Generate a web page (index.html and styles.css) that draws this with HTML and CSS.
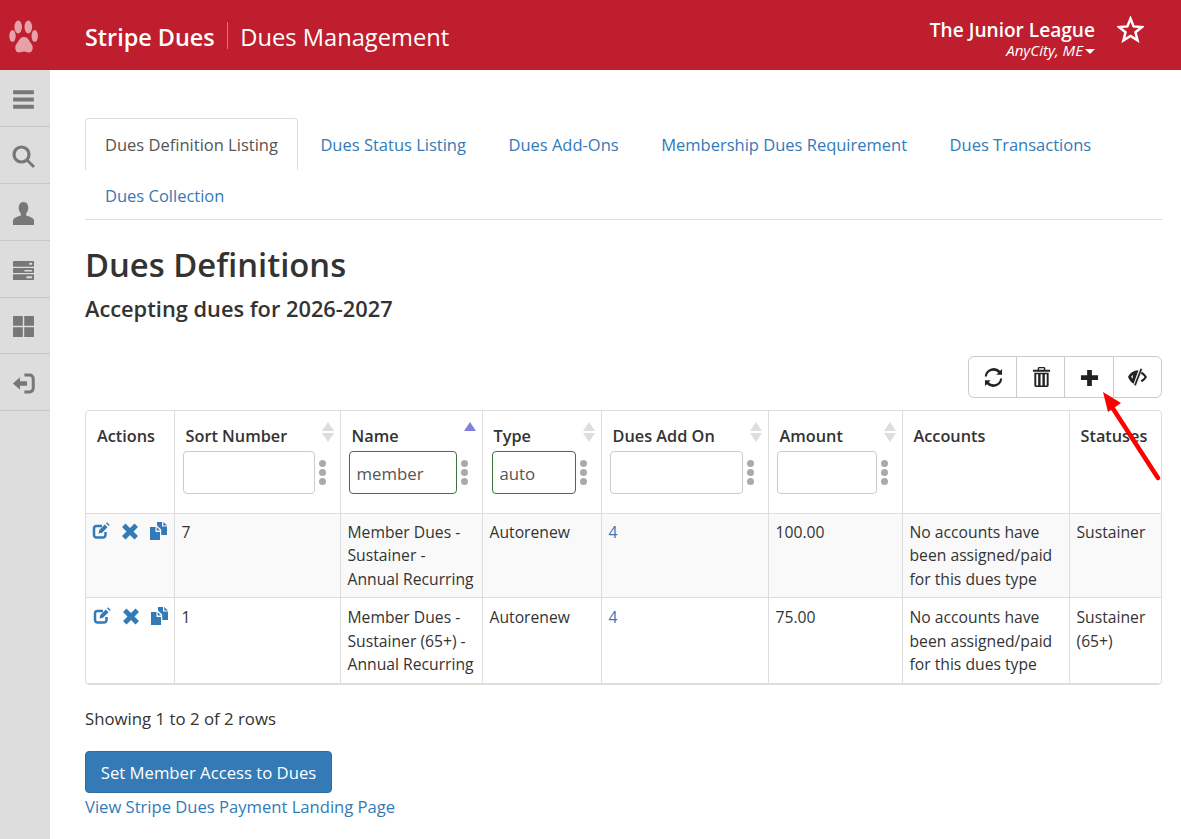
FILE: index.html
```html
<!DOCTYPE html>
<html lang="en">
<head>
<meta charset="utf-8">
<title>Dues Definitions</title>
<link rel="stylesheet" href="styles.css">
</head>
<body>
<header class="topbar">
  <div class="logo">
    <svg class="paw" viewBox="0 0 30 36"><g fill="#e7a1a9"><path d="M15 19c-4 0-5 3.500-7.500 7-2.500 3.500-1 8.500 2.500 8.500 2 0 3-1 5-1s3 1 5 1c3.500 0 5-5 2.500-8.500C20 22.500 19 19 15 19z"/><ellipse cx="9.200" cy="9" rx="3.800" ry="6.500"/><ellipse cx="19.300" cy="9" rx="3.800" ry="6.500"/><ellipse cx="3.500" cy="18" rx="3.200" ry="6"/><ellipse cx="25.700" cy="18" rx="3.200" ry="6"/></g></svg>
  </div>
  <div class="brand">Stripe Dues</div>
  <div class="module">Dues Management</div>
  <div class="org">
    <div class="org-name">The Junior League</div>
    <div class="org-city">AnyCity, ME<span class="caret"></span></div>
  </div>
  <svg class="star" viewBox="0 0 26 26"><path d="M13 2.500l3 7.500 8 .6-6.200 5.100 2 7.800L13 19.200l-6.800 4.300 2-7.800L2 10.600l8-.6z" fill="none" stroke="#fff" stroke-width="2.400"/></svg>
</header>
<div class="shell">
  <nav class="sidebar">
    <div class="side-item"><svg viewBox="0 0 20 20"><path d="M1 2h18v3.500H1zM1 8.200h18v3.500H1zM1 14.500h18V18H1z"/></svg></div>
    <div class="side-item"><svg viewBox="0 0 23 23"><circle cx="9.500" cy="9.500" r="7.500" fill="none" stroke="#777" stroke-width="3.200"/><path d="M14.500 16.500l2-2 6.500 6.500-2 2z"/></svg></div>
    <div class="side-item"><svg viewBox="0 0 24 24"><path d="M12 0c3.500 0 5 3 5 6 0 2.500-1 4.500-2.200 6v2c3 1 8.200 2.500 8.200 5.500V24H1v-4.500c0-3 5.200-4.500 8.200-5.500v-2C8 10.500 7 8.500 7 6c0-3 1.500-6 5-6z"/></svg></div>
    <div class="side-item"><svg viewBox="0 0 24 22"><path fill-rule="evenodd" d="M2 1h20a1 1 0 0 1 1 1v4a1 1 0 0 1-1 1H2a1 1 0 0 1-1-1V2a1 1 0 0 1 1-1zm16 2v2h3V3zM2 8.500h20a1 1 0 0 1 1 1v3a1 1 0 0 1-1 1H2a1 1 0 0 1-1-1v-3a1 1 0 0 1 1-1zm11 2v1.500h8V10.500zM2 15h20a1 1 0 0 1 1 1v4a1 1 0 0 1-1 1H2a1 1 0 0 1-1-1v-4a1 1 0 0 1 1-1zm13 2v2h6v-2z"/></svg></div>
    <div class="side-item side-short"><svg viewBox="0 0 22 22"><path d="M1 1h9.300v9.300H1zM11.700 1H21v9.300h-9.300zM1 11.700h9.300V21H1zM11.700 11.700H21V21h-9.300z"/></svg></div>
    <div class="side-item"><svg viewBox="0 0 26 22"><path d="M1 11l8-7v4.500h8v5H9V18z"/><path d="M14 1.500h6a4 4 0 0 1 4 4v11a4 4 0 0 1-4 4h-6" fill="none" stroke="#777" stroke-width="3.400"/></svg></div>
  </nav>
  <main class="main">
    <ul class="tabs">
      <li class="tab active">Dues Definition Listing</li>
      <li class="tab"><a href="#">Dues Status Listing</a></li>
      <li class="tab"><a href="#">Dues Add-Ons</a></li>
      <li class="tab"><a href="#">Membership Dues Requirement</a></li>
      <li class="tab"><a href="#">Dues Transactions</a></li>
      <li class="tab"><a href="#">Dues Collection</a></li>
    </ul>
    <h1 class="title">Dues Definitions</h1>
    <h2 class="subtitle">Accepting dues for 2026-2027</h2>
    <div class="toolbar">
      <button class="tool tool-nudge"><svg viewBox="0 0 20 20"><path d="M3 9a7 7 0 0 1 12-4l-2 2h6V1l-2 2A9.500 9.500 0 0 0 .8 9zM17 11a7 7 0 0 1-12 4l2-2H1v6l2-2a9.500 9.500 0 0 0 16.200-6z"/></svg></button>
      <button class="tool tool-nudge"><svg class="tall" viewBox="0 0 18 21"><path fill-rule="evenodd" d="M5 1.500C5 .7 5.700 0 6.500 0h5c.8 0 1.500.7 1.500 1.500V3h5v2H0V3h5zM6.500 1.300V3h5V1.300zM1.500 6h15v13.500c0 .8-.7 1.500-1.500 1.500H3c-.8 0-1.500-.7-1.500-1.500zm2 1.500v12h2v-12zm4.500 0v12h2v-12zm4.500 0v12h2v-12z"/></svg></button>
      <button class="tool tool-wide"><svg viewBox="0 0 20 20"><path d="M7.500 2h5v5.500H19v5h-6.500V19h-5v-6.500H1v-5h6.500z"/></svg></button>
      <button class="tool"><svg class="tall" viewBox="0 0 20 20"><path d="M0 10C2.200 5.800 5.500 3.300 11 3L6 17C3 15.800 1.500 12.800 0 10z"/><path d="M3.200 9.800c.5-.9 1.200-1.700 2-2.300-.3.900-.4 1.900-.3 2.800 0 .5.100 1 .3 1.500-.8-.5-1.500-1.200-2-2z" fill="#fff"/><path d="M13 .6l2.400.9L8.400 19.600 6 18.700z" stroke="#fff" stroke-width=".7"/><path d="M14.500 4.500c2.300 1.200 4.200 3.300 5.500 5.500-1.300 2.200-3.200 4.300-5.500 5.500l-1-2.200c1.800-.9 3-2 3.900-3.300-.9-1.300-2.100-2.400-3.900-3.300z"/></svg></button>
    </div>
    <div class="table-wrap">
      <table class="grid">
        <colgroup>
          <col class="c1"><col class="c2"><col class="c3"><col class="c4"><col class="c5"><col class="c6"><col class="c7"><col class="c8">
        </colgroup>
        <thead>
          <tr>
            <th><div class="th-label">Actions</div></th>
            <th class="sortable"><div class="th-label">Sort Number</div><div class="filter"><input class="filter-input" type="text"><span class="dots"><i></i><i></i><i></i></span></div></th>
            <th class="sortable asc"><div class="th-label">Name</div><div class="filter"><input class="filter-input f-name on" type="text" value="member"><span class="dots"><i></i><i></i><i></i></span></div></th>
            <th class="sortable"><div class="th-label">Type</div><div class="filter f-type-wrap"><input class="filter-input f-type on" type="text" value="auto"><span class="dots"><i></i><i></i><i></i></span></div></th>
            <th class="sortable"><div class="th-label">Dues Add On</div><div class="filter"><input class="filter-input f-addon" type="text"><span class="dots"><i></i><i></i><i></i></span></div></th>
            <th class="sortable"><div class="th-label">Amount</div><div class="filter"><input class="filter-input f-amount" type="text"><span class="dots"><i></i><i></i><i></i></span></div></th>
            <th><div class="th-label">Accounts</div></th>
            <th><div class="th-label">Statuses</div></th>
          </tr>
        </thead>
        <tbody>
          <tr class="odd">
            <td class="actions">
              <svg viewBox="0 0 18 18"><path d="M13.500 10v3a2.500 2.500 0 0 1-2.500 2.500H4.500A2.500 2.500 0 0 1 2 13V6.500A2.500 2.500 0 0 1 4.500 4H10" fill="none" stroke="#337ab7" stroke-width="2.500"/><path d="M6.500 11.500l.8-3.500 5.500-5.500 2.700 2.700-5.500 5.500zM14 1.300l1-1 2.700 2.700-1 1z"/></svg>
              <svg viewBox="0 0 18 18"><path d="M4.500 1.500L9 6l4.500-4.500 3.500 3.500L12.500 9.500l4.500 4.500-3.500 3.500L9 13l-4.500 4.500L1 14l4.500-4.500L1 5z"/></svg>
              <svg viewBox="0 0 18 18"><path d="M0 5h5.500v5H10v8H0zM6.700 5l3.300 3.500H6.700zM7 0h5v4.500h5V13h-5.800V7.500L7 3.500zM13.300 0L17 3.500h-3.700z"/></svg>
            </td>
            <td>7</td>
            <td>Member Dues - Sustainer - Annual Recurring</td>
            <td>Autorenew</td>
            <td><a href="#">4</a></td>
            <td>100.00</td>
            <td>No accounts have been assigned/paid for this dues type</td>
            <td>Sustainer</td>
          </tr>
          <tr>
            <td class="actions">
              <svg viewBox="0 0 18 18"><path d="M13.500 10v3a2.500 2.500 0 0 1-2.500 2.500H4.500A2.500 2.500 0 0 1 2 13V6.500A2.500 2.500 0 0 1 4.500 4H10" fill="none" stroke="#337ab7" stroke-width="2.500"/><path d="M6.500 11.500l.8-3.500 5.500-5.500 2.700 2.700-5.500 5.500zM14 1.300l1-1 2.700 2.700-1 1z"/></svg>
              <svg viewBox="0 0 18 18"><path d="M4.500 1.500L9 6l4.500-4.500 3.500 3.500L12.500 9.500l4.500 4.500-3.500 3.500L9 13l-4.500 4.500L1 14l4.500-4.500L1 5z"/></svg>
              <svg viewBox="0 0 18 18"><path d="M0 5h5.500v5H10v8H0zM6.700 5l3.300 3.500H6.700zM7 0h5v4.500h5V13h-5.800V7.500L7 3.500zM13.300 0L17 3.500h-3.700z"/></svg>
            </td>
            <td>1</td>
            <td>Member Dues - Sustainer (65+) - Annual Recurring</td>
            <td>Autorenew</td>
            <td><a href="#">4</a></td>
            <td>75.00</td>
            <td>No accounts have been assigned/paid for this dues type</td>
            <td>Sustainer (65+)</td>
          </tr>
        </tbody>
      </table>
    </div>
    <p class="showing">Showing 1 to 2 of 2 rows</p>
    <button class="primary">Set Member Access to Dues</button>
    <a class="landing" href="#">View Stripe Dues Payment Landing Page</a>
  </main>
</div>
<svg class="arrow" viewBox="0 0 70 96"><path d="M60 88L12 14" stroke="#f00" stroke-width="4.500" stroke-linecap="round" fill="none"/><path d="M5 2l18 11-13 9z" fill="#f00"/></svg>
</body>
</html>
```
FILE: styles.css
```css
* { box-sizing: border-box; }
html, body { margin: 0; padding: 0; }
body {
  position: relative;
  min-height: 839px;
  overflow: hidden;
  font-family: "Open Sans", "Noto Sans", sans-serif;
  font-size: 16.5px;
  line-height: 23.5px;
  color: #333;
  background: #fff;
}
a { color: #337ab7; text-decoration: none; }

.topbar {
  height: 70px;
  background: #be1e2d;
  color: #fff;
  display: flex;
  align-items: center;
}
.logo { width: 50px; display: flex; justify-content: center; }
.paw { width: 30px; height: 36px; margin: 1px 0 0 -2px; }
.brand {
  margin-left: 35px;
  padding: 4px 12px 0 0;
  height: 27px;
  border-right: 1px solid #d8747e;
  font-size: 23.4px;
  font-weight: 600;
  line-height: 23px;
}
.module {
  margin-left: 12.5px;
  padding-top: 4px;
  height: 27px;
  font-size: 23.7px;
  line-height: 23px;
}
.org { margin: 6px 0 0 auto; text-align: right; }
.org-name { font-size: 19.1px; font-weight: 600; line-height: 24px; }
.org-city { font-size: 15.1px; font-style: italic; line-height: 17px; }
.caret {
  display: inline-block;
  margin-left: 2px;
  vertical-align: 2px;
  border-top: 5px solid #fff;
  border-left: 5px solid transparent;
  border-right: 5px solid transparent;
}
.star { width: 27px; height: 27px; margin: -12px 37px 0 22px; }

.shell { display: flex; min-height: 769px; }
.sidebar { width: 50px; flex: none; background: #ddd; }
.side-item {
  height: 57px;
  border-bottom: 1px solid #c8c8c8;
  display: flex;
  align-items: center;
  justify-content: center;
}
.side-short { height: 56px; }
.side-item svg { width: 23px; height: 23px; fill: #777; margin: 2px 0 0 -4px; }

.main { flex: 1; min-width: 0; padding: 48px 19px 0 35px; }

.tabs {
  list-style: none;
  margin: 0;
  padding: 0;
  display: flex;
  flex-wrap: wrap;
  border-bottom: 1px solid #ddd;
}
.tab { padding: 15px 20px 0; height: 50.5px; margin-right: 2.5px; }
.tab.active {
  border: 1px solid #ddd;
  border-bottom: 0;
  border-radius: 4px 4px 0 0;
  padding: 14px 19px 0;
  height: 52px;
  margin-bottom: -1.5px;
  color: #555;
  background: #fff;
}

.title { margin: 25px 0 0; font-size: 32.8px; font-weight: 600; line-height: 40px; color: #333; }
.subtitle { margin: 10px 0 0; font-size: 21.8px; font-weight: 600; line-height: 28px; color: #333; }

.toolbar {
  display: flex;
  justify-content: flex-end;
  margin-top: 33px;
}
.tool {
  width: 49px;
  height: 42px;
  margin-left: -1px;
  padding: 0;
  background: #fff;
  border: 1px solid #ccc;
  display: flex;
  align-items: center;
  justify-content: center;
}
.tool-wide { width: 50px; }
.tool:first-child { border-radius: 6px 0 0 6px; }
.tool:last-child { border-radius: 0 6px 6px 0; }
.tool svg { width: 19px; height: 19px; fill: #222; }
.tool svg.tall { height: 20px; }
.tool-nudge svg { margin-left: 1px; }

.table-wrap {
  margin-top: 12px;
  border: 1px solid #ddd;
  border-radius: 4px;
  overflow: hidden;
}
.grid { width: 100%; table-layout: fixed; border-collapse: collapse; }
.c1 { width: 88px; }
.c2 { width: 166px; }
.c3 { width: 142px; }
.c4 { width: 119px; }
.c5 { width: 167px; }
.c6 { width: 134px; }
.c7 { width: 167px; }
.c8 { width: 93px; }
.grid th {
  position: relative;
  height: 102px;
  padding: 0 0 0 8px;
  vertical-align: top;
  text-align: left;
  font-size: 16.3px;
  font-weight: 600;
  border-right: 1px solid #ddd;
  border-bottom: 1px solid #ddd;
}
.grid th:last-child, .grid td:last-child { border-right: 0; }
.th-label { padding: 14px 0 0 3px; height: 40px; }
.sortable::before, .sortable::after {
  content: "";
  position: absolute;
  right: 6px;
  border-left: 6px solid transparent;
  border-right: 6px solid transparent;
}
.sortable::before { top: 11px; border-bottom: 9px solid #ddd; }
.sortable::after { top: 22px; border-top: 9px solid #ddd; }
.asc::before { border-bottom-color: #8080dd; }
.asc::after { display: none; }
.filter { display: flex; align-items: center; gap: 3px; }
.filter-input {
  width: 132px;
  height: 43px;
  padding: 2px 7px 0;
  border: 1px solid #ccc;
  border-radius: 4px;
  font: inherit;
  font-size: 16.8px;
  font-weight: 400;
  color: #555;
  background: #fff;
}
.f-name { width: 108px; }
.f-type { width: 84px; }
.f-type-wrap { margin-left: 1px; }
.f-addon { width: 133px; }
.f-amount { width: 100px; }
.filter-input.on { border-color: #3c763d; }
.dots { display: flex; flex-direction: column; gap: 2px; margin-left: 1px; }
.dots i { width: 7px; height: 7px; border-radius: 50%; background: #aaa; }
.grid td {
  padding: 7px 7px 6px;
  font-size: 15.7px;
  vertical-align: top;
  border-right: 1px solid #ddd;
  border-bottom: 1px solid #ddd;
}
.grid tbody tr:last-child td { padding: 8px 7px 6px; }
.odd td { background: #f9f9f9; }
.grid td.actions { white-space: nowrap; font-size: 0; padding-left: 6px; }
.actions svg { width: 18px; height: 18px; margin: 1px 11px 0 0; fill: #337ab7; }

.showing { margin: 22px 0 0; font-size: 16.8px; }
.primary {
  display: block;
  margin-top: 21px;
  width: 247px;
  height: 42px;
  padding: 2px 0 0;
  border: 1px solid #2e6da4;
  border-radius: 4px;
  background: #337ab7;
  color: #fff;
  font: inherit;
  font-size: 16.7px;
}
.landing { display: block; margin-top: 2px; font-size: 16.6px; }

.arrow { position: absolute; left: 1098px; top: 390px; width: 70px; height: 96px; }
```
